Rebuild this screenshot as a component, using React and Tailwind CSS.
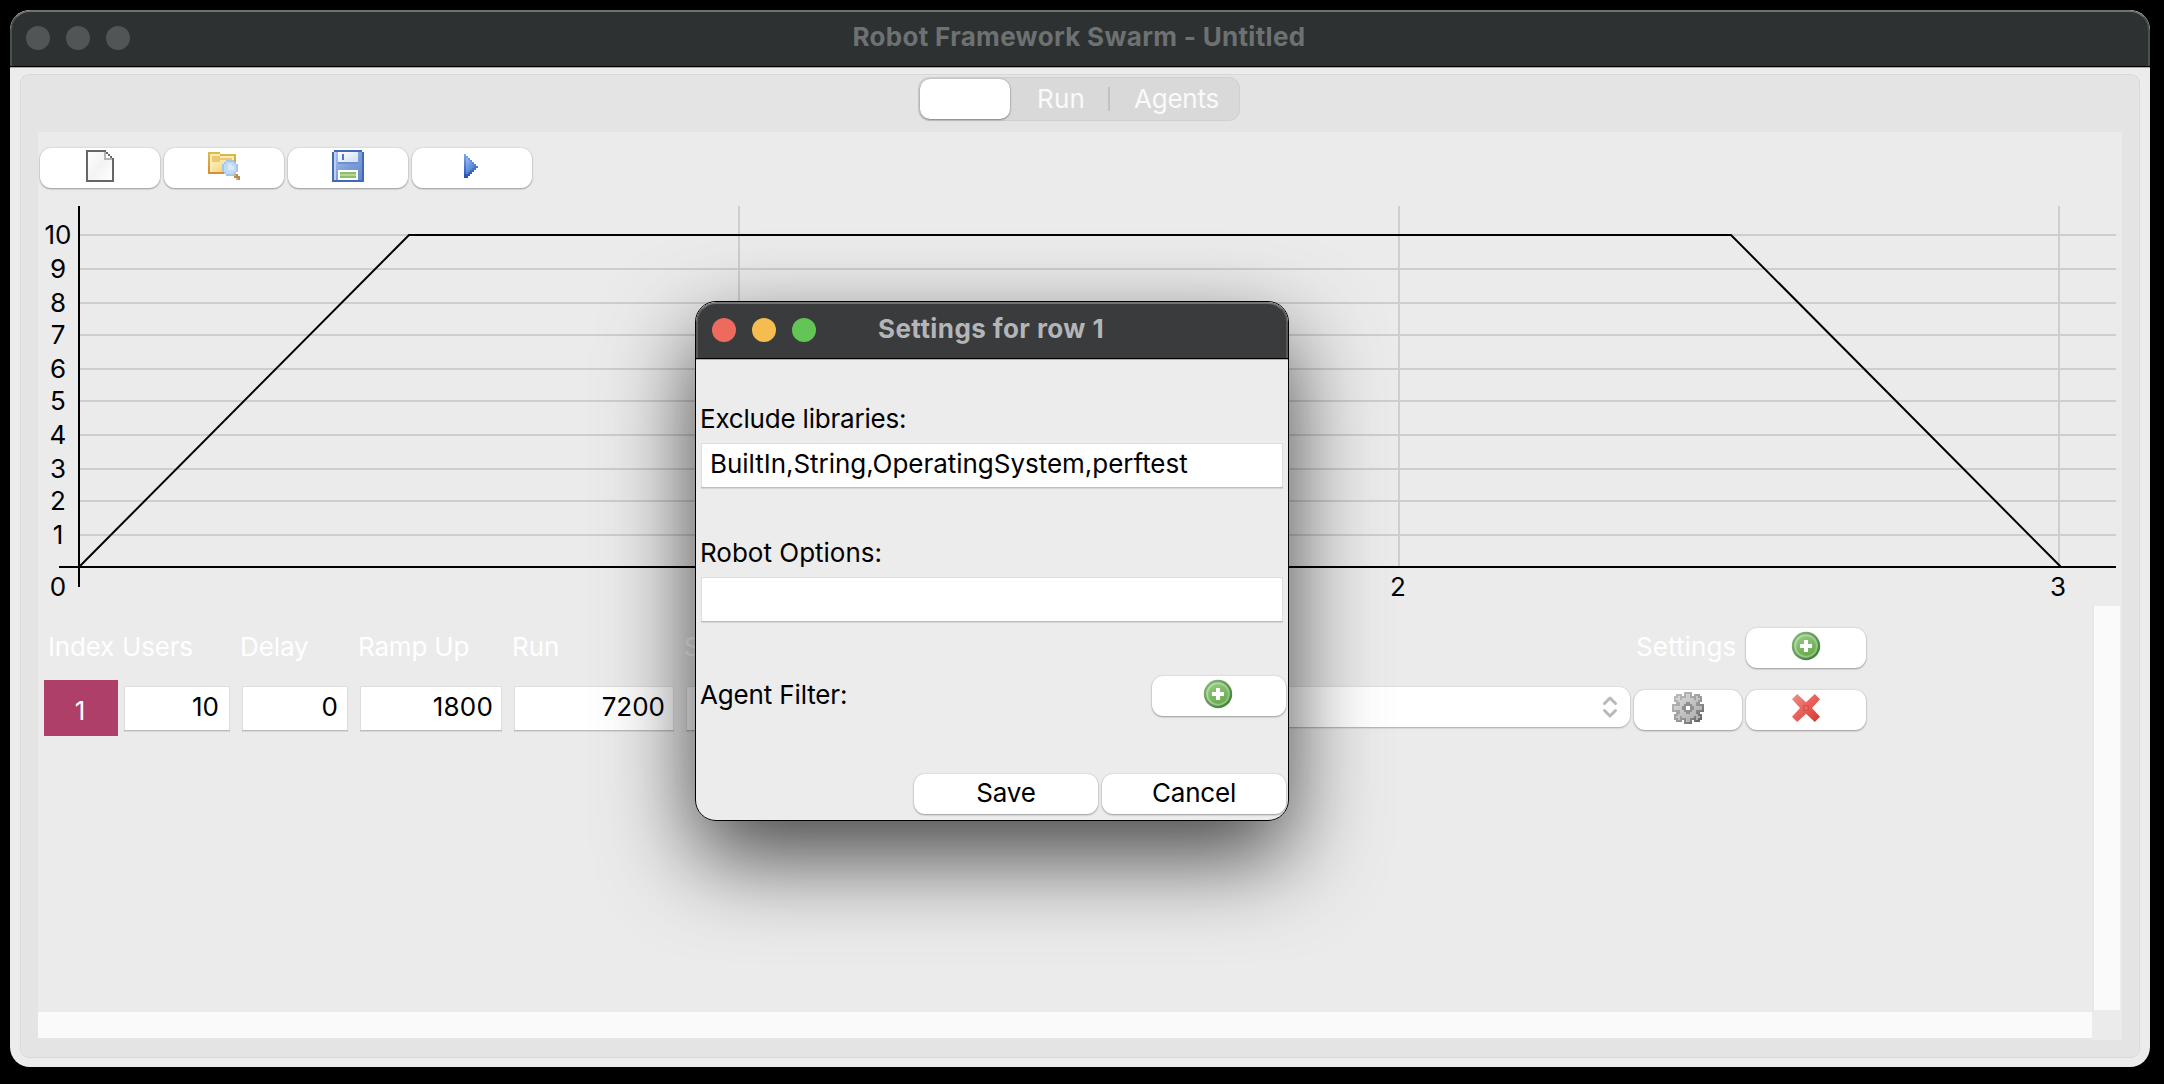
import React from "react";

function PlusIcon() {
  return (
    <svg width="32" height="32" viewBox="0 0 16 16">
      <defs>
        <linearGradient id="plusRim" x1="0" y1="0" x2="1" y2="1">
          <stop offset="0" stopColor="#8dbb80" />
          <stop offset="1" stopColor="#357a2c" />
        </linearGradient>
        <linearGradient id="plusFill" x1="0" y1="0" x2="0.4" y2="1">
          <stop offset="0" stopColor="#96ca84" />
          <stop offset="1" stopColor="#6dac52" />
        </linearGradient>
        <linearGradient id="plusRing" x1="0" y1="0" x2="1" y2="1">
          <stop offset="0" stopColor="#bfe3b3" />
          <stop offset="1" stopColor="#86ba74" />
        </linearGradient>
      </defs>
      <circle cx="8" cy="8" r="7.1" fill="url(#plusRim)" />
      <circle cx="8" cy="8" r="5.9" fill="url(#plusRing)" />
      <circle cx="8" cy="8" r="5" fill="url(#plusFill)" />
      <path d="M7 5h2v2h2v2H9v2H7V9H5V7h2z" fill="#ffffff" />
    </svg>
  );
}

function GearIcon() {
  return (
    <svg width="32" height="32" viewBox="0 0 16 16" shapeRendering="crispEdges">
      <defs>
        <linearGradient id="gearRim" x1="0" y1="0" x2="1" y2="1">
          <stop offset="0" stopColor="#c2c2c2" />
          <stop offset="0.55" stopColor="#9a9a9a" />
          <stop offset="1" stopColor="#555555" />
        </linearGradient>
        <linearGradient id="gearFill" x1="0" y1="0" x2="1" y2="1">
          <stop offset="0" stopColor="#dcdcdc" />
          <stop offset="1" stopColor="#a8a8a8" />
        </linearGradient>
      </defs>
      <path d="M6 0h4v2h1V1h3v1h1v3h-1v1h2v4h-2v1h1v3h-1v1h-3v-1h-1v2H6v-2H5v1H2v-1H1v-3h1v-1H0V6h2V5H1V2h1V1h3v1h1z" fill="url(#gearRim)" />
      <path d="M7 1h2v2h2v1h1V2h1v1h1v1h-1v1h-1v2h3v2h-3v2h1v1h1v1h-1v1h-1v-2h-1v1H9v2H7v-2H5v-1H4v2H3v-1H2v-1h1v-1h1V9H1V7h3V5H3V4H2V3h1V2h1v2h1V3h2z" fill="url(#gearFill)" />
      <path d="M6 6h1V5h2v1h1v1h1v2h-1v1H9v1H7v-1H6V9H5V7h1z" fill="#909090" />
      <path d="M7 7h2v2H7z" fill="#ffffff" />
    </svg>
  );
}

function DeleteIcon() {
  return (
    <svg width="32" height="32" viewBox="0 0 16 16">
      <defs>
        <linearGradient id="delFill" gradientUnits="userSpaceOnUse" x1="1" y1="1" x2="15" y2="15">
          <stop offset="0" stopColor="#f09089" />
          <stop offset="0.5" stopColor="#e8605a" />
          <stop offset="1" stopColor="#d4352c" />
        </linearGradient>
      </defs>
      <path
        d="M3.600 1 8 5.100 12.400 1 15 3.600 11 8l4 4.400-2.600 2.600L8 10.900 3.600 15 1 12.400 5 8 1 3.600z"
        fill="url(#delFill)"
      />
      <path d="M6.500 6.500h3v3h-3z" fill="#df4f49" />
      <path d="M7.200 7.200h1.600v1.600H7.200z" fill="#ec6f69" />
    </svg>
  );
}

function PageIcon() {
  return (
    <svg width="32" height="32" viewBox="0 0 16 16" shapeRendering="crispEdges">
      <defs>
        <linearGradient id="pageFill" x1="0" y1="0" x2="1" y2="1">
          <stop offset="0" stopColor="#ffffff" />
          <stop offset="0.5" stopColor="#f3f3f3" />
          <stop offset="1" stopColor="#ffffff" />
        </linearGradient>
      </defs>
      <path d="M1 0h10v1h1v1h1v1h1v1h1v12H1z" fill="#666666" />
      <path d="M2 1h9v1h1v1h1v1h1v11H2z" fill="url(#pageFill)" />
      <path d="M10 1h1v1h1v1h1v1h1v1h-4z" fill="#b5b5b5" />
      <path d="M11 2h1v1h1v1h-2z" fill="#ffffff" />
    </svg>
  );
}

function FolderSearchIcon() {
  return (
    <svg width="32" height="32" viewBox="0 0 16 16" shapeRendering="crispEdges">
      <defs>
        <linearGradient id="folderEdge" x1="0" y1="0" x2="0" y2="1">
          <stop offset="0" stopColor="#dcbc4c" />
          <stop offset="1" stopColor="#d28e3a" />
        </linearGradient>
        <linearGradient id="folderFill" x1="0" y1="0" x2="1" y2="1">
          <stop offset="0" stopColor="#fdf3c9" />
          <stop offset="1" stopColor="#f0cc58" />
        </linearGradient>
      </defs>
      <path d="M0 1h6v1h8v10H0z" fill="url(#folderEdge)" />
      <path d="M1 2h5v1h7v8H1z" fill="#fbecb4" />
      <path d="M2 3h4v1h6v1H6v1H2z" fill="#ecc970" />
      <path d="M2 6h5V5h5v6H2z" fill="url(#folderFill)" />
      <path d="M9 5h4v1h1v1h1v4h-1v1h-1v1H9v-1H8v-1H7V7h1V6h1z" fill="#a9c4e6" />
      <path d="M9 6h4v1h1v4h-1v1H9v-1H8V7h1z" fill="#c0dbf6" />
      <path d="M10 7h2v1h1v2h-3z" fill="#d6e9fb" />
      <path d="M13 12h2v1h1v2h-2v-1h-1z" fill="#b98a57" />
      <path d="M13 12h1v1h-1zM14 14h1v1h-1z" fill="#d0b08c" />
    </svg>
  );
}

function FloppyIcon() {
  return (
    <svg width="32" height="32" viewBox="0 0 16 16" shapeRendering="crispEdges">
      <defs>
        <linearGradient id="floppyFill" x1="0" y1="0" x2="1" y2="1">
          <stop offset="0" stopColor="#a9c3ee" />
          <stop offset="0.5" stopColor="#7d9fdb" />
          <stop offset="1" stopColor="#6287cb" />
        </linearGradient>
        <linearGradient id="shutter" x1="0" y1="0" x2="1" y2="1">
          <stop offset="0" stopColor="#ffffff" />
          <stop offset="1" stopColor="#cfdcf4" />
        </linearGradient>
      </defs>
      <path d="M1 0h14v1h1v15H0V1h1z" fill="#4169b5" />
      <path d="M1 1h14v14H1z" fill="url(#floppyFill)" />
      <path d="M1 1h1v14H1z" fill="#bcd0f3" />
      <path d="M3 1h10v5H3z" fill="url(#shutter)" />
      <path d="M5 2h1v3H5z" fill="#4f78c4" />
      <path d="M3 6h10v1H3z" fill="#6c90d2" />
      <path d="M3 10h10v5H3z" fill="#ffffff" />
      <path d="M4 11h8v1H4zM4 13h8v1H4z" fill="#8fbe6a" />
      <path d="M4 12h8v1H4z" fill="#b4d596" />
    </svg>
  );
}

function PlayIcon() {
  return (
    <svg width="32" height="32" viewBox="0 0 16 16" shapeRendering="crispEdges">
      <defs>
        <linearGradient id="playFill" x1="0" y1="0" x2="0.6" y2="1">
          <stop offset="0" stopColor="#9cbdf0" />
          <stop offset="1" stopColor="#4a77cf" />
        </linearGradient>
        <linearGradient id="playEdge" x1="0" y1="0" x2="0" y2="1">
          <stop offset="0" stopColor="#7fa8e6" />
          <stop offset="1" stopColor="#1f4fb5" />
        </linearGradient>
      </defs>
      <path d="M4 2h1v1h1v1h1v1h1v1h1v1h1v1h1v1h-1v1H9v1H8v1H7v1H6v1H4z" fill="url(#playEdge)" />
      <path d="M5 4h1v1h1v1h1v1h1v2H8v1H7v1H6v1H5z" fill="url(#playFill)" />
    </svg>
  );
}

function MacButton({ className = "", children }) {
  return (
    <button
      className={
        "flex h-[40px] items-center justify-center rounded-[11px] bg-white shadow-[0_1px_2px_rgba(0,0,0,0.32),0_0_2px_rgba(0,0,0,0.16)] " +
        className
      }
    >
      {children}
    </button>
  );
}

function Entry({ className = "", children }) {
  return (
    <div
      className={
        "flex h-[44px] items-center justify-end border border-b-0 border-[#dedede] bg-white pb-[3px] shadow-[0_1px_0_#bdbdbd,0_2px_0_#d6d6d6] " +
        className
      }
    >
      {children}
    </div>
  );
}

const yTicks = [
  ["10", 235],
  ["9", 269],
  ["8", 303],
  ["7", 335],
  ["6", 369],
  ["5", 401],
  ["4", 435],
  ["3", 469],
  ["2", 501],
  ["1", 535],
];

const xTicks = [
  ["1", 739],
  ["2", 1399],
  ["3", 2059],
];

function RampChart() {
  return (
    <svg className="block h-[418px] w-[2084px]" viewBox="38 188 2084 418" fontSize="26">
      <g stroke="#cecece" strokeWidth="2">
        {yTicks.map(([label, y]) => (
          <line key={label} x1="78" x2="2116" y1={y} y2={y} />
        ))}
        {xTicks.map(([label, x]) => (
          <line key={label} x1={x} x2={x} y1="206" y2="566" />
        ))}
      </g>
      <g stroke="#000000" strokeWidth="2" fill="none">
        <line x1="79" x2="79" y1="206" y2="587" />
        <line x1="59" x2="2116" y1="567" y2="567" />
        <polyline points="79,567 409,235 1731,235 2061,567" />
      </g>
      <g fill="#000000" textAnchor="middle">
        {yTicks.map(([label, y]) => (
          <text key={label} x="58" y={y + 9}>
            {label}
          </text>
        ))}
        <text x="58" y="596">0</text>
        {xTicks.map(([label, x]) => (
          <text key={label} x={x - 1} y="596">
            {label}
          </text>
        ))}
      </g>
    </svg>
  );
}

function MainWindow() {
  return (
    <div className="flex h-[1057px] w-[2140px] flex-col overflow-hidden rounded-[20px] bg-[#ececec]">
      <header className="flex h-[58px] shrink-0 flex-col">
        <div className="flex h-[56px] items-start rounded-t-[20px] border-2 border-b-0 border-t-[#6f7272] border-x-[#4c5051] bg-[#2d3132] pl-[14px]">
          <div className="flex w-[200px] gap-4 pt-[14px]">
            <span className="h-6 w-6 rounded-full bg-[#515556]" />
            <span className="h-6 w-6 rounded-full bg-[#515556]" />
            <span className="h-6 w-6 rounded-full bg-[#515556]" />
          </div>
          <h1 className="flex-1 pr-[216px] text-center font-bold leading-[50px] tracking-[0.31px] text-[#6d7172]">
            Robot Framework Swarm - Untitled
          </h1>
        </div>
        <div className="h-px bg-black" />
        <div className="h-px bg-[#a9a9a9]" />
      </header>

      <div className="mx-[10px] mt-[6px] flex h-[984px] flex-col rounded-[9px] border border-[#d8d8d8] bg-[#e4e4e4] px-[17px]">
        <nav className="flex h-[57px] justify-center pt-[2px]">
          <div className="ml-[-2px] flex h-[44px] w-[322px] items-center rounded-[11px] border border-[#cfcfcf] bg-[#d9d9d9]">
            <div className="ml-px h-[40px] w-[90px] rounded-[10px] bg-white shadow-[0_1px_2px_rgba(0,0,0,0.35),0_0_2px_rgba(0,0,0,0.25)]" />
            <div className="ml-[27px] w-[71px] tracking-[0.2px] text-[#fafafa]">Run</div>
            <div className="h-6 w-[2px] bg-[#c2c2c2]" />
            <div className="ml-[24px] tracking-[-0.25px] text-[#fafafa]">Agents</div>
          </div>
        </nav>

        <main className="flex h-[908px] w-[2084px] flex-col bg-[#ebebeb]">
          <div className="flex h-[56px] gap-1 pl-[2px] pt-4">
            <MacButton className="w-[120px] pb-[4px]">
              <PageIcon />
            </MacButton>
            <MacButton className="w-[120px] pb-[4px]">
              <FolderSearchIcon />
            </MacButton>
            <MacButton className="w-[120px] pb-[4px]">
              <FloppyIcon />
            </MacButton>
            <MacButton className="w-[120px] pb-[4px]">
              <PlayIcon />
            </MacButton>
          </div>

          <RampChart />

          <div className="flex h-[434px]">
            <div className="flex w-[2054px] flex-col">
              <div className="h-[406px] pl-[6px]">
                <div className="grid grid-cols-[80px_118px_118px_154px_172px_948px_112px_120px] grid-rows-[74px_56px] text-white">
                  <div className="pl-[4px] leading-[81px] tracking-[-0.2px]">Index</div>
                  <div className="leading-[81px] tracking-[-0.2px]">
                    <span className="-ml-[2px]">Users</span>
                  </div>
                  <div className="leading-[81px] tracking-[-0.11px]">
                    <span className="-ml-[2px]">Delay</span>
                  </div>
                  <div className="leading-[81px] tracking-[-0.18px]">
                    <span className="-ml-[2px]">Ramp Up</span>
                  </div>
                  <div className="leading-[81px]">
                    <span className="-ml-[2px]">Run</span>
                  </div>
                  <div className="leading-[81px]">
                    <span className="-ml-[2px]">Script</span>
                  </div>
                  <div className="pl-[2px] leading-[81px] tracking-[0.1px]">Settings</div>
                  <div className="pt-[22px]">
                    <MacButton className="w-[120px] pb-[4px]">
                      <PlusIcon />
                    </MacButton>
                  </div>

                  <div className="h-[56px] w-[74px] bg-[#ae3f69] pr-[2px] text-center leading-[62px]">1</div>
                  <div className="pt-[6px] text-black">
                    <Entry className="w-[106px] pr-[10px]">10</Entry>
                  </div>
                  <div className="pt-[6px] text-black">
                    <Entry className="w-[106px] pr-[9px]">0</Entry>
                  </div>
                  <div className="pt-[6px] text-black">
                    <Entry className="w-[142px] pr-[8px] tracking-[0.2px]">1800</Entry>
                  </div>
                  <div className="pt-[6px] text-black">
                    <Entry className="w-[160px] pr-[8px]">7200</Entry>
                  </div>
                  <div className="flex justify-between pt-[6px]">
                    <Entry className="w-[400px]" />
                    <div className="mr-1 mt-px flex h-[40px] w-[440px] items-center justify-end rounded-[11px] bg-white pr-[12px] shadow-[0_1px_2px_rgba(0,0,0,0.25),0_0_2px_rgba(0,0,0,0.12)]">
                      <svg width="16" height="24" viewBox="0 0 16 24" fill="none" stroke="#b9b9b9" strokeWidth="3" strokeLinecap="round" strokeLinejoin="round">
                        <path d="M2.500 8.500 8 3l5.500 5.500M2.500 15.500 8 21l5.500-5.500" />
                      </svg>
                    </div>
                  </div>
                  <div className="pt-[10px]">
                    <MacButton className="w-[108px] pb-[4px]">
                      <GearIcon />
                    </MacButton>
                  </div>
                  <div className="pt-[10px]">
                    <MacButton className="w-[120px] pb-[4px]">
                      <DeleteIcon />
                    </MacButton>
                  </div>
                </div>
              </div>
              <div className="h-[26px] bg-[#fafafa]" />
              <div className="h-[2px] bg-[#e6e6e6]" />
            </div>
            <div className="h-[404px] w-[28px] border-l-2 border-[#e6e6e6] bg-[#fafafa]" />
          </div>
        </main>
      </div>
    </div>
  );
}

function SettingsDialog() {
  return (
    <section className="absolute left-[695px] top-[301px] flex h-[520px] w-[594px] flex-col overflow-hidden rounded-[21px] border border-black bg-[#ececec]">
      <div className="flex h-[56px] shrink-0 items-start rounded-t-[20px] border-2 border-b-0 border-t-[#717375] border-x-[#58595b] bg-[#3a3b3d] pl-[14px]">
        <div className="flex gap-4 pt-[14px]">
          <span className="h-6 w-6 rounded-full bg-[#ed6a5f]" />
          <span className="h-6 w-6 rounded-full bg-[#f5bd4f]" />
          <span className="h-6 w-6 rounded-full bg-[#62c555]" />
        </div>
        <h2 className="ml-[62px] font-bold leading-[50px] tracking-[0.42px] text-[#b4b5b6]">Settings for row 1</h2>
      </div>
      <div className="h-px shrink-0 bg-black" />
      <div className="h-px shrink-0 bg-[#b0b0b0]" />

      <div className="flex flex-col text-black">
        <label className="mt-[41px] h-[42px] pl-1 leading-[36px] tracking-[-0.2px]">Exclude libraries:</label>
        <Entry className="ml-[5px] w-[582px] justify-start! pl-2 tracking-[-0.03px]">BuiltIn,String,OperatingSystem,perftest</Entry>

        <label className="mt-[48px] h-[42px] pl-1 leading-[36px]">Robot Options:</label>
        <Entry className="ml-[5px] w-[582px]" />

        <div className="mt-[55px] flex h-[40px] justify-between pl-[4px] pr-[2px]">
          <label className="leading-[37px] tracking-[-0.15px]">Agent Filter:</label>
          <MacButton className="w-[134px] pb-[4px] pr-[2px]">
            <PlusIcon />
          </MacButton>
        </div>

        <div className="mt-[58px] flex justify-end gap-1 pr-[2px]">
          <MacButton className="w-[184px] pb-[3px] tracking-[-0.17px]">Save</MacButton>
          <MacButton className="w-[184px] pb-[3px] tracking-[-0.19px]">Cancel</MacButton>
        </div>
      </div>
    </section>
  );
}

export default function App() {
  return (
    <div className="relative h-[1084px] w-[2164px] overflow-hidden bg-black pl-[10px] pt-[10px] font-[Inter,sans-serif] text-[26px] leading-[32px] whitespace-nowrap">
      <MainWindow />
      <div className="absolute left-[695px] top-[301px] h-[520px] w-[594px] rounded-[21px] shadow-[0_36px_90px_rgba(0,0,0,0.7)]" />
      <SettingsDialog />
    </div>
  );
}
